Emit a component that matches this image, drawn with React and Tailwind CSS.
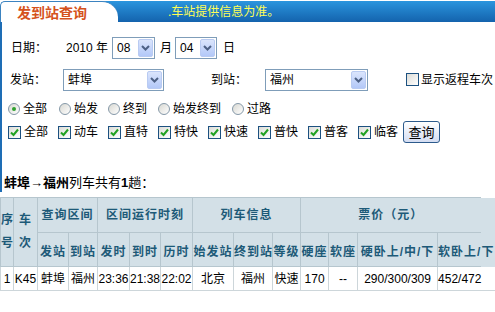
import React from "react";

const F = "font-['Liberation_Sans','Noto_Sans_CJK_SC',sans-serif]";

function Chevron() {
  return (
    <svg width="9" height="6" viewBox="0 0 9 6">
      <path d="M1 1 L4.5 4.5 L8 1" fill="none" stroke="#4d6185" strokeWidth="2" />
    </svg>
  );
}

function Sel({ w, value }) {
  return (
    <div className={`flex h-[22px] items-stretch border border-[#7f9db9] bg-white p-[1px] ${w}`}>
      <div className="flex flex-1 items-center pl-[3px] text-[12px] leading-none text-black">{value}</div>
      <div className="flex w-[15px] items-center justify-center rounded-[2px] border border-[#b9cbf2] bg-gradient-to-b from-[#dbe5fc] to-[#b3c8f8]">
        <Chevron />
      </div>
    </div>
  );
}

function Radio({ checked }) {
  return (
    <div className="flex h-[12px] w-[12px] items-center justify-center rounded-full border border-[#8598a8] bg-gradient-to-br from-[#d8d8d2] to-white">
      {checked && <div className="h-[4px] w-[4px] rounded-full bg-[#2fa02f]" />}
    </div>
  );
}

function Check() {
  return (
    <div className="flex h-[13px] w-[13px] items-center justify-center border border-[#1c5180] bg-gradient-to-br from-[#dcdcd7] to-white">
      <svg width="9" height="9" viewBox="0 0 9 9">
        <path d="M1 4.5 L3.5 7 L8 1.5" fill="none" stroke="#21a121" strokeWidth="2" />
      </svg>
    </div>
  );
}

const radios = [
  ["全部", "w-[51px]", true],
  ["始发", "w-[49px]", false],
  ["终到", "w-[50px]", false],
  ["始发终到", "w-[74px]", false],
  ["过路", "w-[50px]", false],
];

const checks = [
  ["全部", "w-[50px]"],
  ["动车", "w-[50px]"],
  ["直特", "w-[50px]"],
  ["特快", "w-[50px]"],
  ["快速", "w-[50px]"],
  ["普快", "w-[50px]"],
  ["普客", "w-[50px]"],
  ["临客", "w-[45px]"],
];

const H1 = "border border-[#b6c6ce] bg-[#d3e0e7] p-0 text-center align-middle text-[12px] font-bold tracking-[1px] text-[#1d5a78] whitespace-nowrap";
const H2 = "border border-[#b6c6ce] bg-[#d3e0e7] p-0 pt-[4px] text-center align-middle text-[12px] font-bold tracking-[1px] text-[#1d5a78] whitespace-nowrap";
const D = "border border-[#cdd6da] p-0 text-center align-middle text-[12px] text-black whitespace-nowrap";

export default function App() {
  return (
    <div className={`relative h-[312px] w-[495px] overflow-hidden bg-white ${F}`}>
      {/* header */}
      <div className="flex h-[22px] items-end">
        <div className="relative z-10 h-[21px] w-[118px] shrink-0 rounded-tl-[5px] rounded-tr-[16px] border-l border-t border-[#3b83c0] bg-white pl-[16px] pt-[3px] text-[14px] font-bold leading-[16px] text-[#d5521c]">
          发到站查询
        </div>
        <div className="-ml-[20px] flex h-[21px] flex-1 items-center bg-gradient-to-b from-[#2b95de] to-[#1463ad] pl-[70px] text-[12px] leading-none text-[#ffff55]">
          .车站提供信息为准。
        </div>
      </div>

      {/* main panel */}
      <div className="flex flex-col border-l-2 border-[#1e6db5] pb-[2px] text-[12px] text-black">
        {/* date row */}
        <div className="mt-[15px] flex h-[22px] items-center leading-none">
          <span className="ml-[9px] w-[55px]">日期：</span>
          <span>2010 年</span>
          <div className="ml-[4px]">
            <Sel w="w-[43px]" value="08" />
          </div>
          <span className="ml-[5px]">月</span>
          <div className="ml-[3px]">
            <Sel w="w-[42px]" value="04" />
          </div>
          <span className="ml-[6px]">日</span>
        </div>

        {/* station row */}
        <div className="mt-[9px] flex h-[23px] items-center leading-none">
          <span className="ml-[8px] w-[53px]">发站：</span>
          <Sel w="w-[101px]" value="蚌埠" />
          <span className="ml-[47px] w-[54px]">到站：</span>
          <Sel w="w-[103px]" value="福州" />
          <div className="ml-[38px]">
            <div className="h-[13px] w-[13px] border border-[#1c5180] bg-gradient-to-br from-[#dcdcd7] to-white" />
          </div>
          <span className="ml-[2px]">显示返程车次</span>
        </div>

        {/* radio row */}
        <div className="mt-[11px] flex h-[14px] items-center pl-[6px] leading-none">
          {radios.map(([t, w, c]) => (
            <div key={t} className={`flex items-center gap-[3px] ${w}`}>
              <Radio checked={c} />
              <span>{t}</span>
            </div>
          ))}
        </div>

        {/* checkbox row */}
        <div className="mt-[5px] flex h-[22px] items-center pl-[6px] leading-none">
          {checks.map(([t, w]) => (
            <div key={t} className={`flex items-center gap-[3px] ${w}`}>
              <Check />
              <span>{t}</span>
            </div>
          ))}
          <button className="flex h-[22px] w-[37px] items-center justify-center rounded-[3px] border border-[#2c5a8c] bg-gradient-to-b from-white to-[#d4ddf2] text-[13px] leading-none text-black">
            查询
          </button>
        </div>

        {/* summary */}
        <div className="mt-[32px] h-[15px] pl-[2px] text-[13px] leading-[15px]">
          <b>蚌埠→福州</b>列车共有<b>1</b>趟：
        </div>
      </div>

      {/* table */}
      <div className="mt-[5px] w-[495px] overflow-hidden">
        <table className="w-[520px] table-fixed border-collapse">
          <colgroup>
            <col className="w-[13px]" />
            <col className="w-[24px]" />
            <col className="w-[31px]" />
            <col className="w-[29px]" />
            <col className="w-[32px]" />
            <col className="w-[31px]" />
            <col className="w-[32px]" />
            <col className="w-[41px]" />
            <col className="w-[39px]" />
            <col className="w-[28px]" />
            <col className="w-[28px]" />
            <col className="w-[29px]" />
            <col className="w-[80px]" />
            <col className="w-[43px]" />
            <col className="w-[40px]" />
          </colgroup>
          <thead>
            <tr className="h-[35px]">
              <th rowSpan={2} className={`${H1} leading-[23px]`}>序<br />号</th>
              <th rowSpan={2} className={`${H1} leading-[23px]`}>车<br />次</th>
              <th colSpan={2} className={H1}>查询区间</th>
              <th colSpan={3} className={H1}>区间运行时刻</th>
              <th colSpan={3} className={H1}>列车信息</th>
              <th colSpan={4} className={`${H1} border-r-0`}>票价（元）</th>
              <th rowSpan={2} className="border-0 bg-[#d3e0e7] p-0" />
            </tr>
            <tr className="h-[34px]">
              <th className={H2}>发站</th>
              <th className={H2}>到站</th>
              <th className={H2}>发时</th>
              <th className={H2}>到时</th>
              <th className={H2}>历时</th>
              <th className={H2}>始发站</th>
              <th className={H2}>终到站</th>
              <th className={H2}>等级</th>
              <th className={H2}>硬座</th>
              <th className={H2}>软座</th>
              <th className={H2}>硬卧上/中/下</th>
              <th className={`${H2} border-r-0 text-left`}>软卧上/下</th>
            </tr>
          </thead>
          <tbody>
            <tr className="h-[24px]">
              <td className={D}>1</td>
              <td className={D}>K45</td>
              <td className={D}>蚌埠</td>
              <td className={D}>福州</td>
              <td className={D}>23:36</td>
              <td className={D}>21:38</td>
              <td className={D}>22:02</td>
              <td className={D}>北京</td>
              <td className={D}>福州</td>
              <td className={D}>快速</td>
              <td className={D}>170</td>
              <td className={D}>--</td>
              <td className={D}>290/300/309</td>
              <td className={`${D} border-r-0`}>452/472</td>
              <td className="border-0 border-b border-[#cdd6da] p-0" />
            </tr>
          </tbody>
        </table>
      </div>
    </div>
  );
}
